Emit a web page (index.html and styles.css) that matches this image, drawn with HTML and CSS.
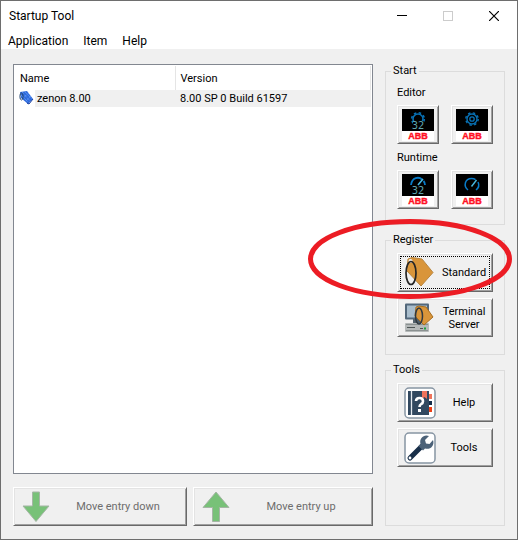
FILE: index.html
```html
<!DOCTYPE html>
<html lang="en">
<head>
<meta charset="utf-8">
<title>Startup Tool</title>
<link rel="stylesheet" href="styles.css">
</head>
<body>
<div class="window">
  <header class="titlebar">
    <h1>Startup Tool</h1>
    <div class="controls">
      <button type="button" aria-label="Minimize"><svg width="10" height="10" shape-rendering="crispEdges"><path d="M0 4.500h10" stroke="#000"/></svg></button>
      <button type="button" aria-label="Maximize" disabled><svg width="10" height="10" shape-rendering="crispEdges"><path d="M.5.5h9v9h-9z" fill="none" stroke="#ccc"/></svg></button>
      <button type="button" aria-label="Close"><svg width="10" height="10"><path d="M0 0l10 10M10 0L0 10" stroke="#000" stroke-width="1.2"/></svg></button>
    </div>
  </header>
  <nav class="menu">
    <button type="button">Application</button>
    <button type="button">Item</button>
    <button type="button">Help</button>
  </nav>
  <main class="content">
    <section class="entries">
      <div class="list">
        <table>
          <thead><tr><th class="name">Name</th><th>Version</th></tr></thead>
          <tbody><tr>
            <td class="name"><span class="entry"><svg width="16" height="16" viewBox="0 0 16 16"><path d="M1 2l7-1 6 8-5 5-7-6z" fill="#2f6bdc"/><path d="M3 2l8 9M6 2l7 7M2 5l7 7M10 3L4 8M12 6l-5 5" stroke="#75a8ff" stroke-width=".8" stroke-dasharray="1 1"/><ellipse cx="2.500" cy="6.500" rx="1.600" ry="3.500" fill="none" stroke="#24456e"/><path d="M8 13l2 1 4-5" fill="none" stroke="#183d9c"/></svg><span>zenon 8.00</span></span></td>
            <td><span class="cell">8.00 SP 0 Build 61597</span></td>
          </tr></tbody>
        </table>
      </div>
      <div class="moves">
        <button type="button" class="btn move down" disabled><svg width="28" height="32" viewBox="0 0 28 32"><path d="M10.500 1h7v14H27L14 30.500 1 15h9.500z" fill="#78c178" stroke="#a5b5a5"/></svg><span>Move entry down</span></button>
        <button type="button" class="btn move up" disabled><svg width="28" height="32" viewBox="0 0 28 32"><path d="M10.500 30.500h7v-14H27L14 1 1 16.500h9.500z" fill="#78c178" stroke="#a5b5a5"/></svg><span>Move entry up</span></button>
      </div>
    </section>
    <aside class="side">
      <fieldset>
        <legend>Start</legend>
        <p>Editor</p>
        <div class="pair">
          <button type="button" class="btn launch" aria-label="Editor 32"><svg width="32" height="32" viewBox="0 0 32 32"><path d="M0 0h32v22H0z" fill="#000"/><path d="M0 22h32v10H0z" fill="#fff"/><circle cx="16" cy="10" r="5" fill="none" stroke="#0871b5" stroke-width="1.600"/><circle cx="16" cy="10" r="6.300" fill="none" stroke="#0871b5" stroke-width="1.600" stroke-dasharray="2.470 2.470"/><path d="M11 12h10v10H11z" fill="#000"/><text class="bits" x="16" y="20">32</text><text class="brand" x="16" y="30">ABB</text></svg></button>
          <button type="button" class="btn launch" aria-label="Editor"><svg width="32" height="32" viewBox="0 0 32 32"><path d="M0 0h32v22H0z" fill="#000"/><path d="M0 22h32v10H0z" fill="#fff"/><circle cx="16" cy="10" r="5" fill="none" stroke="#0871b5" stroke-width="1.400"/><circle cx="16" cy="10" r="6.200" fill="none" stroke="#0871b5" stroke-width="1.400" stroke-dasharray="2.440 2.440"/><circle cx="16" cy="10" r="2.200" fill="none" stroke="#0871b5" stroke-width="1.300"/><text class="brand" x="16" y="30">ABB</text></svg></button>
        </div>
        <p>Runtime</p>
        <div class="pair">
          <button type="button" class="btn launch" aria-label="Runtime 32"><svg width="32" height="32" viewBox="0 0 32 32"><path d="M0 0h32v22H0z" fill="#000"/><path d="M0 22h32v10H0z" fill="#fff"/><path d="M9 11c1-8 8-8.500 11-5.500M21.500 7c1 1 1.500 2 1.500 4" fill="none" stroke="#087bc8" stroke-width="1.800"/><path d="M16 11l5-6" stroke="#47b7df" stroke-width="1.600"/><text class="bits" x="16" y="20">32</text><text class="brand" x="16" y="30">ABB</text></svg></button>
          <button type="button" class="btn launch" aria-label="Runtime"><svg width="32" height="32" viewBox="0 0 32 32"><path d="M0 0h32v22H0z" fill="#000"/><path d="M0 22h32v10H0z" fill="#fff"/><path d="M12 16C7 12 9 4.500 15.500 4.500q2.500 0 4 1.200M22 8c1.500 3 .5 6-2 8" fill="none" stroke="#087bc8" stroke-width="1.500"/><path d="M15.500 12.500L20.500 6" stroke="#47b7df" stroke-width="1.400"/><text class="brand" x="16" y="30">ABB</text></svg></button>
        </div>
      </fieldset>
      <fieldset class="register">
        <legend>Register</legend>
        <div class="stack">
          <button type="button" class="btn tool focused"><svg width="32" height="32" viewBox="0 0 32 32"><path d="M4 2l4-1.500L18 2l11 13.500L17 29 3 14z" fill="#d9953a" stroke="#b9863f"/><circle cx="6.500" cy="4" r="2" fill="#eee"/><ellipse cx="7" cy="16" rx="5" ry="11.500" fill="none" stroke="#262626" stroke-width="1.700"/></svg><span>Standard</span></button>
          <button type="button" class="btn tool"><svg width="32" height="32" viewBox="0 0 32 32"><rect x="1" y="1.500" width="24" height="16" rx="1" fill="#52677a"/><path d="M3 3.500h20v12H3z" fill="#a9bdcc"/><path d="M9 17h8v4H9z" fill="#53616b"/><rect x="1" y="21" width="24" height="9" rx="1" fill="#b5b9b9"/><path d="M2 22.500h22M2 28.500h22" stroke="#8b9191"/><path d="M3 25.500h8M16 26.500h3" stroke="#4e5555"/><path d="M20 26.500h2" stroke="#17a33c" stroke-width="2"/><path d="M12 5l3-1 7 1 7 10-9 8-9-9z" fill="#d9953a" stroke="#a66e20"/><ellipse cx="15" cy="14" rx="3.500" ry="8" fill="none" stroke="#303941" stroke-width="1.500"/></svg><span>Terminal<br>Server</span></button>
        </div>
        <svg class="marker" viewBox="0 0 206 82" aria-hidden="true"><ellipse cx="103" cy="41" rx="99.500" ry="37.500" fill="none" stroke="#ec1c24" stroke-width="5"/></svg>
      </fieldset>
      <fieldset class="tools">
        <legend>Tools</legend>
        <div class="stack">
          <button type="button" class="btn tool"><svg width="32" height="32" viewBox="0 0 32 32"><rect x="1" y="1" width="30" height="30" rx="4" fill="#fff" stroke="#8795a3" stroke-width="1.500"/><path d="M4 4h21v24H4z" fill="#31485f"/><path d="M7.500 4v24" stroke="#e5eaf0" stroke-width="1.300"/><path d="M18 4h5v8l-2.500-2L18 12z" fill="#ef735b"/><path d="M25 7h3v5h-3z" fill="#ef735b"/><path d="M25 14h3v4h-3z" fill="#132c49"/><path d="M25 20h3v5h-3z" fill="#ed3e14"/><path d="M12 14q0-3 3.500-3t3.500 3.200q0 1.800-1.800 2.800-1.700 1-1.700 3" fill="none" stroke="#fff" stroke-width="2.600"/><path d="M14 22h3v3h-3z" fill="#fff"/></svg><span>Help</span></button>
          <button type="button" class="btn tool"><svg width="32" height="32" viewBox="0 0 32 32"><rect x="1" y="1" width="30" height="30" rx="4" fill="#fff" stroke="#8795a3" stroke-width="1.500"/><path d="M6 26L18 14" stroke="#182f49" stroke-width="5" stroke-linecap="round"/><path d="M16.500 12C15 6 20 2 25 4l-4 4 1 3.500 3.500.5 3.500-4c2 6-3 10-8 8.500l-2 2-4.500-4.500z" fill="#4c6278"/><circle cx="6" cy="26" r="1.400" fill="#fff"/></svg><span>Tools</span></button>
        </div>
      </fieldset>
    </aside>
  </main>
</div>
</body>
</html>
```
FILE: styles.css
```css
* { box-sizing: border-box; }

body {
  margin: 0;
  background: #f0f0f0;
  color: #000;
  font: 11px/14px Roboto, Tahoma, sans-serif;
}

button { font: inherit; color: inherit; padding: 0; }
svg { display: block; flex: none; }
p { margin: 0; }

.window {
  display: flex;
  flex-direction: column;
  min-height: 100vh;
  border: 1px solid #6e6e6e;
}

.titlebar {
  display: flex;
  justify-content: space-between;
  height: 29px;
  padding-left: 8px;
  background: #fff;
  font: 12px/30px Roboto, "Segoe UI", sans-serif;
}
.titlebar h1 { margin: 0; font: inherit; }
.controls { display: flex; }
.controls button {
  display: grid;
  place-items: center;
  width: 46px;
  border: 0;
  background: none;
}

.menu {
  display: flex;
  gap: 15px;
  height: 19px;
  padding: 1px 7px 0;
  background: #fff;
  font: 12px/20px Roboto, "Segoe UI", sans-serif;
}
.menu button { border: 0; background: none; }

.content {
  flex: 1;
  display: grid;
  grid-template-columns: 1fr 120px;
  gap: 12px;
  padding: 15px 12px 13px 12px;
}

.entries { display: flex; flex-direction: column; gap: 13px; }
.list {
  flex: 1;
  padding: 1px;
  border: 1px solid #828790;
  background: #fff;
}
table { width: 100%; border-collapse: collapse; table-layout: fixed; }
th { height: 24px; padding: 2px 5px 0; border-right: 1px solid #e5e5e5; text-align: left; font-weight: normal; }
th.name { width: 160px; }
td { height: 17px; padding: 0; }
.entry { display: flex; padding-left: 4px; }
.entry span { flex: 1; padding-left: 2px; line-height: 17px; background: #f0f0f0; }
.cell { display: block; padding-left: 5px; line-height: 17px; background: #f0f0f0; }

.moves { display: grid; grid-template-columns: 174fr 180fr; gap: 6px; }

.btn {
  display: flex;
  align-items: center;
  height: 39px;
  border: 1px solid;
  border-color: #fff #696969 #696969 #fff;
  background: #f0f0f0;
  box-shadow: inset 1px 1px #e3e3e3, inset -1px -1px #a0a0a0;
}
.btn span { flex: 1; text-align: center; }
.move { padding-left: 8px; color: #6d6d6d; }

.side { display: flex; flex-direction: column; gap: 8px; }
fieldset {
  position: relative;
  min-width: 0;
  margin: 0;
  padding: 8px 11px 15px;
  border: 1px solid #dcdcdc;
}
legend { margin-left: -6px; padding: 0 2px; line-height: 14px; }
.pair { display: flex; justify-content: space-between; margin: 5px 0 7px; }
.pair:last-child { margin-bottom: 0; }
.launch { width: 42px; justify-content: center; }
.bits { fill: #5fa4ad; font: 11px "DejaVu Sans Condensed", sans-serif; text-anchor: middle; }
.brand { fill: #ff1024; stroke: #ff1024; stroke-width: .4px; font: bold 9px "Liberation Sans", sans-serif; text-anchor: middle; }

.stack { display: grid; gap: 6px; }
.register, .tools { padding-top: 6px; }
.register { padding-bottom: 17px; }
.tools { flex: 1; }
.tool { padding-left: 6px; }
.tool span { line-height: 13px; }
.focused { outline: 1px dotted #000; outline-offset: -4px; }

.marker {
  position: absolute;
  top: -29px;
  right: -9px;
  width: 206px;
  height: 82px;
  pointer-events: none;
}
```
